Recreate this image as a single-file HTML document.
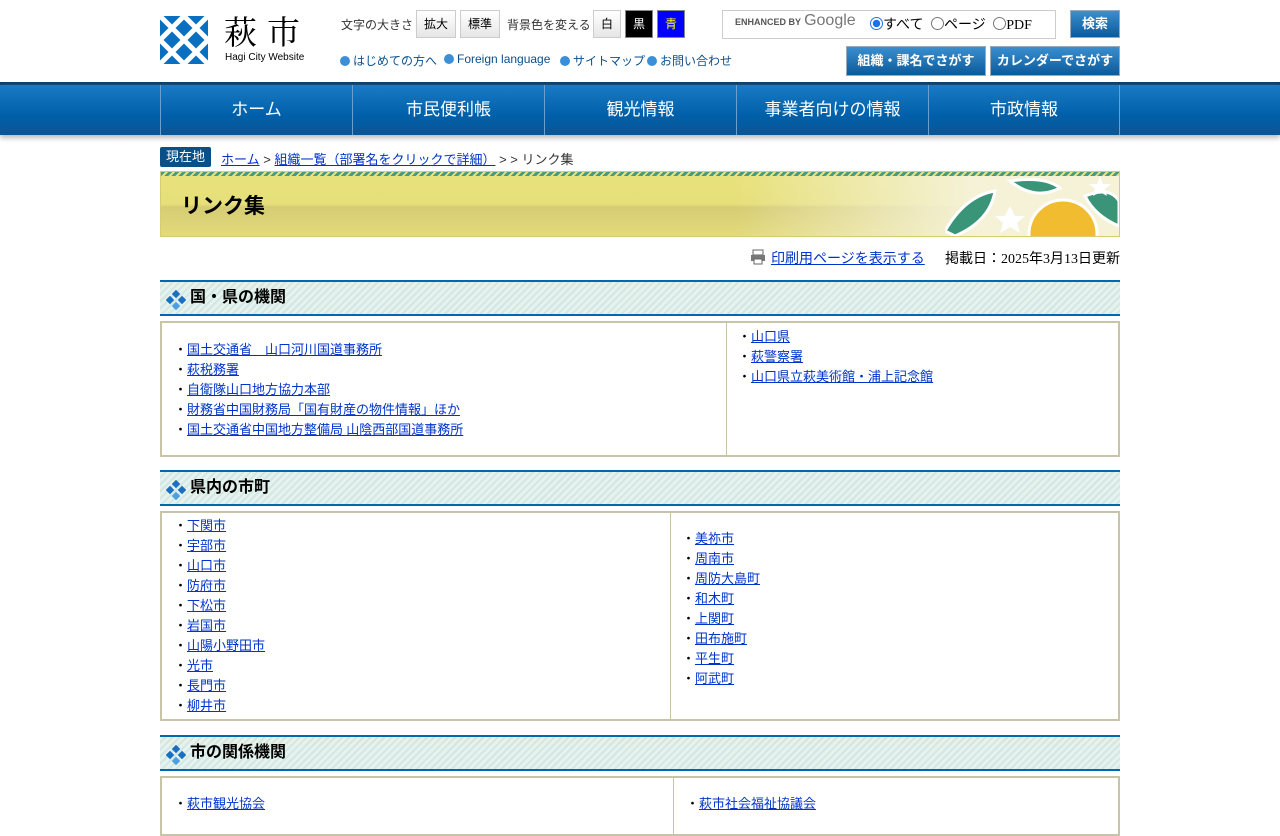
<!DOCTYPE html>
<html lang="ja"><head><meta charset="utf-8">
<style>
*{margin:0;padding:0;box-sizing:border-box}
body{width:1280px;height:800px;overflow:hidden;background:#fff;font-family:"Liberation Serif","Noto Sans CJK JP",serif;font-size:13px;color:#000;position:relative}
.a{position:absolute}
.sans{font-family:"Liberation Sans","Noto Sans CJK JP",sans-serif}
a{color:#0033cc;text-decoration:underline}
.btn{position:absolute;top:10px;height:28px;border:1px solid #ccc;background:linear-gradient(#fff,#e6e6e6);font-size:12px;line-height:26px;text-align:center;font-family:"Liberation Sans","Noto Sans CJK JP",sans-serif}
.bb{position:absolute;color:#fff;font-weight:bold;font-size:13px;text-align:center;background:linear-gradient(#3a8fcf,#0b5a9c);border:1px solid #9ab;font-family:"Liberation Sans","Noto Sans CJK JP",sans-serif}
.nav{position:absolute;top:85px;left:0;width:1280px;height:50px;background:linear-gradient(#1a7ac4,#0060aa 60%,#0b5596);box-shadow:0 3px 5px #bbb}
.nav div{position:absolute;top:0;height:50px;width:192px;border-left:1px solid #6aa0d0;color:#fff;font-size:17px;line-height:50px;text-align:center;font-family:"Liberation Sans","Noto Sans CJK JP",sans-serif}
.hd{position:absolute;left:160px;width:960px;height:36px;border-top:2px solid #0068b0;border-bottom:2px solid #0068b0;background:repeating-linear-gradient(135deg,#e6f2ee 0 3px,#d3e7e2 3px 5px);font-weight:bold;font-size:16px;line-height:32px;padding-left:30px;font-family:"Liberation Sans","Noto Sans CJK JP",sans-serif}
.dia{position:absolute;left:6px;top:8px;width:20px;height:20px}
.bx{position:absolute;left:160px;width:960px;border:2px solid #c8c4a8}
.col{position:absolute;top:0;bottom:0;border-right:1px solid #c8c4a8}
.l{line-height:20px;font-size:13px}
.nl{position:absolute;top:52px;font-size:12px;color:#0a4f8c;font-family:"Liberation Sans","Noto Sans CJK JP",sans-serif}
.nl:before{content:"";display:inline-block;width:10px;height:10px;border-radius:50%;background:#3b8fd6;margin-right:3px;vertical-align:-1px}
</style></head><body>
<svg class="a" style="left:160px;top:16px" width="48" height="48" viewBox="0 0 48 48"><rect width="48" height="48" fill="#0b6fc0"/><g stroke="#fff" stroke-width="5"><line x1="0" y1="0" x2="48" y2="48"/><line x1="48" y1="0" x2="0" y2="48"/><line x1="24" y1="0" x2="48" y2="24"/><line x1="0" y1="24" x2="24" y2="48"/><line x1="24" y1="0" x2="0" y2="24"/><line x1="48" y1="24" x2="24" y2="48"/></g></svg>
<div class="a" style="left:224px;top:12px;font-size:33px;line-height:38px;letter-spacing:10px;font-family:'Noto Serif CJK SC',serif">萩市</div>
<div class="a sans" style="left:225px;top:52px;font-size:10px;line-height:12px">Hagi City Website</div>
<div class="a sans" style="left:341px;top:16px;font-size:12px;color:#333">文字の大きさ</div>
<div class="btn" style="left:416px;width:40px">拡大</div>
<div class="btn" style="left:460px;width:40px">標準</div>
<div class="a sans" style="left:507px;top:16px;font-size:12px;color:#333">背景色を変える</div>
<div class="btn" style="left:593px;width:28px">白</div>
<div class="btn" style="left:625px;width:28px;background:#000;color:#fff;border-color:#888">黒</div>
<div class="btn" style="left:657px;width:28px;background:#0000ff;color:#ff0;border-color:#888">青</div>
<div class="nl" style="left:340px">はじめての方へ</div>
<div class="nl" style="left:444px">Foreign language</div>
<div class="nl" style="left:560px">サイトマップ</div>
<div class="nl" style="left:647px">お問い合わせ</div>
<div class="a" style="left:722px;top:10px;width:334px;height:29px;border:1px solid #ccc"></div>
<div class="a sans" style="left:735px;top:12px;font-size:11px;color:#555"><span style="font-size:9px;font-weight:bold">ENHANCED BY</span> <span style="font-size:16px;color:#777">Google</span></div>
<div class="a" style="left:870px;top:14px;font-size:14px"><span style="display:inline-block;width:13px;height:13px;border-radius:50%;border:1px solid #1a73e8;background:radial-gradient(#1a73e8 45%,#fff 50%);vertical-align:-1px"></span>すべて <span style="display:inline-block;width:13px;height:13px;border-radius:50%;border:1px solid #777;vertical-align:-1px;margin-left:4px"></span>ページ <span style="display:inline-block;width:13px;height:13px;border-radius:50%;border:1px solid #777;vertical-align:-1px;margin-left:4px"></span>PDF</div>
<div class="bb" style="left:1070px;top:10px;width:50px;height:28px;line-height:26px">検索</div>
<div class="bb" style="left:846px;top:46px;width:140px;height:30px;line-height:28px">組織・課名でさがす</div>
<div class="bb" style="left:990px;top:46px;width:130px;height:30px;line-height:28px">カレンダーでさがす</div>
<div class="a" style="left:0;top:82px;width:1280px;height:3px;background:#0a3d6e"></div>
<div class="nav"><div style="left:160px">ホーム</div><div style="left:352px">市民便利帳</div><div style="left:544px">観光情報</div><div style="left:736px">事業者向けの情報</div><div style="left:928px;border-right:1px solid #6aa0d0">市政情報</div></div>
<div class="a sans" style="left:160px;top:147px;width:51px;height:20px;background:#0a4f85;color:#fff;font-size:13px;line-height:20px;text-align:center;border-radius:2px">現在地</div>
<div class="a sans" style="left:221px;top:149px;font-size:13px;color:#333"><a href="#">ホーム</a> &gt; <a href="#">組織一覧（部署名をクリックで詳細）</a> &gt; &gt; リンク集</div>
<div class="a" style="left:160px;top:171px;width:960px;height:66px;border:1px solid #d8cc70;background:linear-gradient(90deg,rgba(255,255,255,0) 60%,#f5f2d8 85%),linear-gradient(#e8e27c 0,#e6df7a 50%,#d6cc74 55%,#e2da7a 100%)"></div>
<div class="a" style="left:161px;top:172px;width:958px;height:4px;background:repeating-linear-gradient(135deg,#4a9a80 0 3px,#e8e27c 3px 5px)"></div>
<svg class="a" style="left:945px;top:176px" width="174" height="60" viewBox="0 0 174 60"><path d="M0 55 Q20 20 50 15 Q45 45 10 60Z" fill="#3a9478" stroke="#fff" stroke-width="3"/><path d="M65 5 Q100 0 115 12 Q90 25 65 5Z" fill="#3a9478" stroke="#fff" stroke-width="3"/><circle cx="118" cy="58" r="34" fill="#f2bc30" stroke="#fff" stroke-width="3"/><path d="M140 20 Q165 10 174 25 L174 50 Q150 40 140 20Z" fill="#3a9478" stroke="#fff" stroke-width="3"/><polygon points="65,30 70,40 80,40 72,47 75,57 65,51 55,57 58,47 50,40 60,40" fill="#fff"/><polygon points="155,0 158,8 166,8 160,13 162,20 155,16 148,20 150,13 144,8 152,8" fill="#fff"/></svg>
<div class="a sans" style="left:181px;top:190px;font-size:21px;font-weight:bold">リンク集</div>
<svg class="a" style="left:750px;top:249px" width="16" height="16"><rect x="3" y="1" width="10" height="5" fill="#fff" stroke="#666"/><rect x="1" y="6" width="14" height="6" fill="#777"/><rect x="4" y="10" width="8" height="5" fill="#fff" stroke="#666"/></svg>
<div class="a" style="left:771px;top:248px;font-size:14px"><a href="#">印刷用ページを表示する</a></div>
<div class="a" style="left:944px;top:248px;font-size:14px;width:176px;text-align:right;white-space:nowrap">掲載日：2025年3月13日更新</div>
<svg width="0" height="0" style="position:absolute"><defs><g id="d" fill="#1a6fc0"><rect x="7" y="1" width="6" height="6" transform="rotate(45 10 4)"/><rect x="1" y="7" width="6" height="6" transform="rotate(45 4 10)"/><rect x="13" y="7" width="6" height="6" transform="rotate(45 16 10)"/><rect x="7" y="13" width="6" height="6" transform="rotate(45 10 16)" fill="#4aa0e0"/></g></defs></svg>
<div class="hd" style="top:280px"><svg class="dia"><use href="#d"/></svg>国・県の機関</div>
<div class="bx" style="top:321px;height:136px"><div class="col" style="left:0;width:565px"></div>
<div class="a l" style="left:12px;top:17px">・<a href="#">国土交通省　山口河川国道事務所</a><br>・<a href="#">萩税務署</a><br>・<a href="#">自衛隊山口地方協力本部</a><br>・<a href="#">財務省中国財務局「国有財産の物件情報」ほか</a><br>・<a href="#">国土交通省中国地方整備局 山陰西部国道事務所</a></div>
<div class="a l" style="left:576px;top:4px">・<a href="#">山口県</a><br>・<a href="#">萩警察署</a><br>・<a href="#">山口県立萩美術館・浦上記念館</a></div></div>
<div class="hd" style="top:470px"><svg class="dia"><use href="#d"/></svg>県内の市町</div>
<div class="bx" style="top:511px;height:210px"><div class="col" style="left:0;width:509px"></div>
<div class="a l" style="left:12px;top:3px">・<a href="#">下関市</a><br>・<a href="#">宇部市</a><br>・<a href="#">山口市</a><br>・<a href="#">防府市</a><br>・<a href="#">下松市</a><br>・<a href="#">岩国市</a><br>・<a href="#">山陽小野田市</a><br>・<a href="#">光市</a><br>・<a href="#">長門市</a><br>・<a href="#">柳井市</a></div>
<div class="a l" style="left:520px;top:16px">・<a href="#">美祢市</a><br>・<a href="#">周南市</a><br>・<a href="#">周防大島町</a><br>・<a href="#">和木町</a><br>・<a href="#">上関町</a><br>・<a href="#">田布施町</a><br>・<a href="#">平生町</a><br>・<a href="#">阿武町</a></div></div>
<div class="hd" style="top:735px"><svg class="dia"><use href="#d"/></svg>市の関係機関</div>
<div class="bx" style="top:776px;height:60px"><div class="col" style="left:0;width:512px"></div>
<div class="a l" style="left:12px;top:16px">・<a href="#">萩市観光協会</a></div>
<div class="a l" style="left:524px;top:16px">・<a href="#">萩市社会福祉協議会</a></div></div>
</body></html>
